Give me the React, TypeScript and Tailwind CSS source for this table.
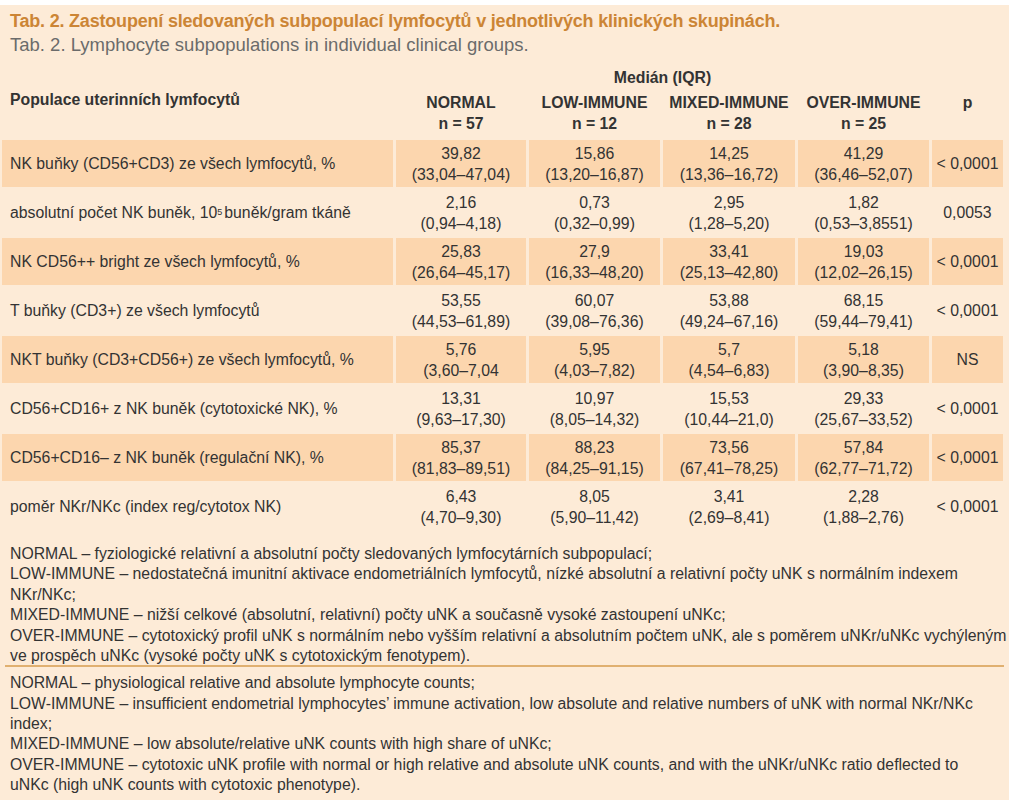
import React from "react";

type Row = { label: React.ReactNode; vals: [string, string][]; p: string; shaded: boolean };

const rows: Row[] = [
  { label: "NK buňky (CD56+CD3) ze všech lymfocytů, %", vals: [["39,82", "(33,04–47,04)"], ["15,86", "(13,20–16,87)"], ["14,25", "(13,36–16,72)"], ["41,29", "(36,46–52,07)"]], p: "< 0,0001", shaded: true },
  { label: <>absolutní počet NK buněk, 10<sup className="text-[9px] relative -top-[1px] mr-[2px]">5</sup> buněk/gram tkáně</>, vals: [["2,16", "(0,94–4,18)"], ["0,73", "(0,32–0,99)"], ["2,95", "(1,28–5,20)"], ["1,82", "(0,53–3,8551)"]], p: "0,0053", shaded: false },
  { label: "NK CD56++ bright ze všech lymfocytů, %", vals: [["25,83", "(26,64–45,17)"], ["27,9", "(16,33–48,20)"], ["33,41", "(25,13–42,80)"], ["19,03", "(12,02–26,15)"]], p: "< 0,0001", shaded: true },
  { label: "T buňky (CD3+) ze všech lymfocytů", vals: [["53,55", "(44,53–61,89)"], ["60,07", "(39,08–76,36)"], ["53,88", "(49,24–67,16)"], ["68,15", "(59,44–79,41)"]], p: "< 0,0001", shaded: false },
  { label: "NKT buňky (CD3+CD56+) ze všech lymfocytů, %", vals: [["5,76", "(3,60–7,04"], ["5,95", "(4,03–7,82)"], ["5,7", "(4,54–6,83)"], ["5,18", "(3,90–8,35)"]], p: "NS", shaded: true },
  { label: "CD56+CD16+ z NK buněk (cytotoxické NK), %", vals: [["13,31", "(9,63–17,30)"], ["10,97", "(8,05–14,32)"], ["15,53", "(10,44–21,0)"], ["29,33", "(25,67–33,52)"]], p: "< 0,0001", shaded: false },
  { label: "CD56+CD16– z NK buněk (regulační NK), %", vals: [["85,37", "(81,83–89,51)"], ["88,23", "(84,25–91,15)"], ["73,56", "(67,41–78,25)"], ["57,84", "(62,77–71,72)"]], p: "< 0,0001", shaded: true },
  { label: "poměr NKr/NKc (index reg/cytotox NK)", vals: [["6,43", "(4,70–9,30)"], ["8,05", "(5,90–11,42)"], ["3,41", "(2,69–8,41)"], ["2,28", "(1,88–2,76)"]], p: "< 0,0001", shaded: false },
];

const colW = ["w-[130px]", "w-[131px]", "w-[132px]", "w-[131px]"];

export default function App() {
  return (
    <div className="w-[1009px] h-[800px] bg-white pt-[5px]" style={{ fontFamily: '"Liberation Sans", Arial, sans-serif' }}>
      <div className="h-[795px] bg-[#fdebd7] text-[#333333] text-[15.8px] overflow-hidden">
        <div className="pl-[10px] pt-[4px]">
          <div className="text-[18px] font-bold text-[#cc8535] leading-[24px] tracking-[-0.2px]">Tab. 2. Zastoupení sledovaných subpopulací lymfocytů v jednotlivých klinických skupinách.</div>
          <div className="text-[18.5px] text-[#6b6b6b] leading-[24px]">Tab. 2. Lymphocyte subpopulations in individual clinical groups.</div>
        </div>
        {/* header */}
        <div className="flex pl-[2px] mt-[9px] font-bold text-[15.8px]">
          <div className="w-[391px] pl-[8px] pt-[22px]">Populace uterinních lymfocytů</div>
          <div className="flex flex-col">
            <div className="h-[26px] text-center ml-[3px] w-[533px]">Medián (IQR)</div>
            <div className="flex gap-[3px] ml-[3px]">
              {["NORMAL|n = 57", "LOW-IMMUNE|n = 12", "MIXED-IMMUNE|n = 28", "OVER-IMMUNE|n = 25"].map((s, i) => {
                const [a, b] = s.split("|");
                return (
                  <div key={i} className={`${colW[i]} text-center leading-[21px]`}>
                    <div>{a}</div>
                    <div>{b}</div>
                  </div>
                );
              })}
            </div>
          </div>
          <div className="w-[71px] ml-[3px] text-center pt-[25px]">p</div>
        </div>
        {/* body */}
        <div className="mt-[5px] pl-[2px] flex flex-col">
          {rows.map((r, ri) => {
            const bg = r.shaded ? "bg-[#fcd6ae]" : "";
            return (
              <div key={ri} className="flex gap-[3px] h-[49px] py-[1px]">
                <div className={`w-[391px] ${bg} pl-[8px] flex items-center`}>{r.label}</div>
                {r.vals.map((v, vi) => (
                  <div key={vi} className={`${colW[vi]} ${bg} flex flex-col items-center justify-center leading-[21px]`}>
                    <div>{v[0]}</div>
                    <div>{v[1]}</div>
                  </div>
                ))}
                <div className={`w-[71px] ${bg} flex items-center justify-center`}>{r.p}</div>
              </div>
            );
          })}
        </div>
        {/* footnotes */}
        <div className="mt-[13px] pl-[10px] pr-[2px] leading-[20.4px]">
          <div>NORMAL – fyziologické relativní a absolutní počty sledovaných lymfocytárních subpopulací;</div>
          <div>LOW-IMMUNE – nedostatečná imunitní aktivace endometriálních lymfocytů, nízké absolutní a relativní počty uNK s normálním indexem NKr/NKc;</div>
          <div>MIXED-IMMUNE – nižší celkové (absolutní, relativní) počty uNK a současně vysoké zastoupení uNKc;</div>
          <div>OVER-IMMUNE – cytotoxický profil uNK s normálním nebo vyšším relativní a absolutním počtem uNK, ale s poměrem uNKr/uNKc vychýleným ve prospěch uNKc (vysoké počty uNK s cytotoxickým fenotypem).</div>
        </div>
        <div className="mx-[5px] mt-[-1px] h-[2px] bg-[#e0b070]" />
        <div className="mt-[6px] pl-[10px] pr-[30px] leading-[20.3px]">
          <div>NORMAL – physiological relative and absolute lymphocyte counts;</div>
          <div>LOW-IMMUNE – insufficient endometrial lymphocytes’ immune activation, low absolute and relative numbers of uNK with normal NKr/NKc index;</div>
          <div>MIXED-IMMUNE – low absolute/relative uNK counts with high share of uNKc;</div>
          <div>OVER-IMMUNE – cytotoxic uNK profile with normal or high relative and absolute uNK counts, and with the uNKr/uNKc ratio deflected to uNKc (high uNK counts with cytotoxic phenotype).</div>
        </div>
      </div>
    </div>
  );
}
